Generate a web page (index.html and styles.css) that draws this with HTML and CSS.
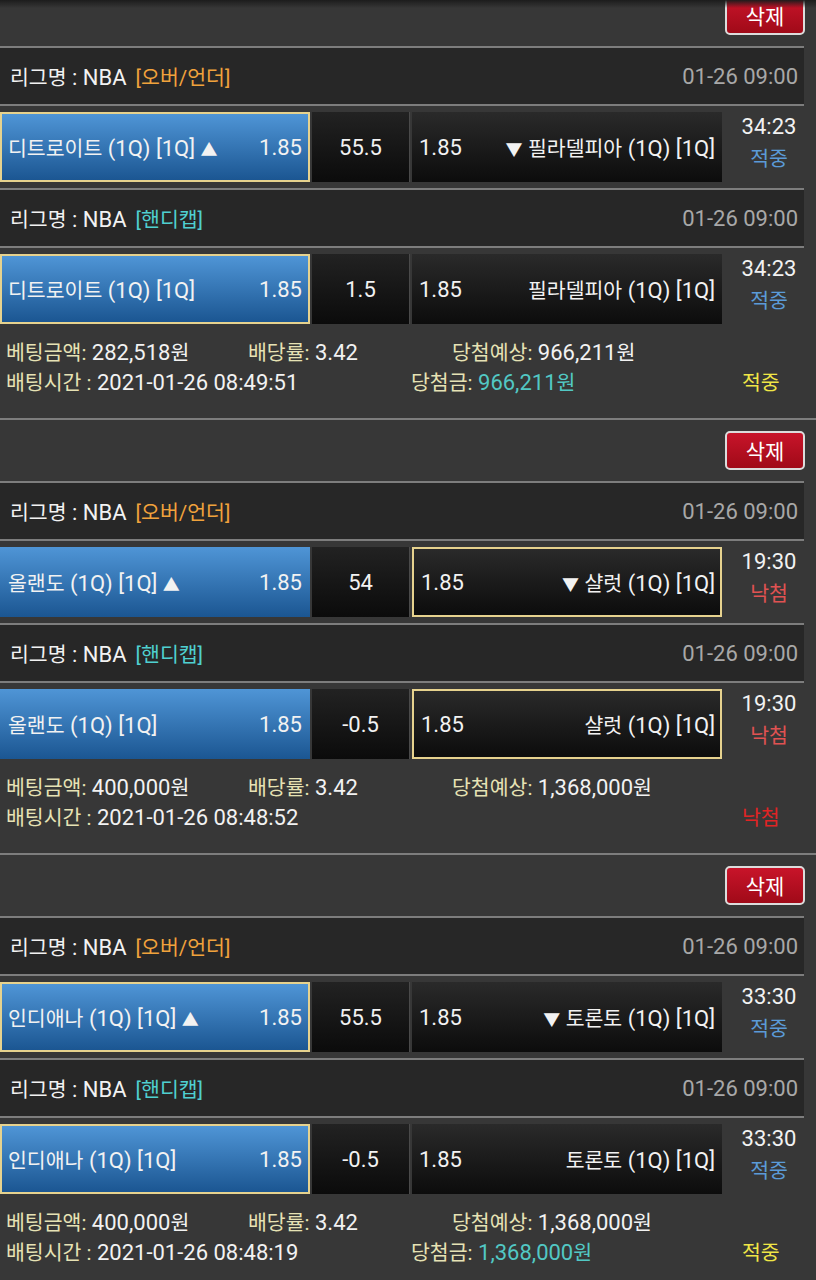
FILE: index.html
```html
<!DOCTYPE html>
<html lang="ko">
<head>
<meta charset="utf-8">
<title>베팅내역</title>
<link rel="stylesheet" href="styles.css">
</head>
<body>
<div class="topshade"></div>
<div class="list">

  <section class="bet">
    <div class="btnbar"><button class="del">삭제</button></div>
    <div class="league"><span class="lname"><span class="k">리그명</span> : NBA</span><span class="type ou">[오버/언더]</span><span class="ltime">01-26 09:00</span></div>
    <div class="game">
      <div class="cell home sel"><span><span class="k">디트로이트</span> (1Q) [1Q] <span class="tri">▲</span></span><span>1.85</span></div>
      <div class="cell mid">55.5</div>
      <div class="cell away"><span>1.85</span><span><span class="tri">▼</span> <span class="k">필라델피아</span> (1Q) [1Q]</span></div>
      <div class="status"><span class="clock">34:23</span><span class="res win">적중</span></div>
    </div>
    <div class="league"><span class="lname"><span class="k">리그명</span> : NBA</span><span class="type hc">[핸디캡]</span><span class="ltime">01-26 09:00</span></div>
    <div class="game last">
      <div class="cell home sel"><span><span class="k">디트로이트</span> (1Q) [1Q]</span><span>1.85</span></div>
      <div class="cell mid">1.5</div>
      <div class="cell away"><span>1.85</span><span><span class="k">필라델피아</span> (1Q) [1Q]</span></div>
      <div class="status"><span class="clock">34:23</span><span class="res win">적중</span></div>
    </div>
    <div class="summary">
      <div class="sline">
        <span class="c1"><b>베팅금액:</b> 282,518<span class="k">원</span></span>
        <span class="c2"><b>배당률:</b> 3.42</span>
        <span class="c3"><b>당첨예상:</b> 966,211<span class="k">원</span></span>
      </div>
      <div class="sline">
        <span class="d1"><b>배팅시간 :</b> 2021-01-26 08:49:51</span>
        <span class="d2"><b>당첨금:</b> <em>966,211<span class="k">원</span></em></span>
        <span class="d3 hit">적중</span>
      </div>
    </div>
  </section>

  <section class="bet">
    <div class="btnbar"><button class="del">삭제</button></div>
    <div class="league"><span class="lname"><span class="k">리그명</span> : NBA</span><span class="type ou">[오버/언더]</span><span class="ltime">01-26 09:00</span></div>
    <div class="game">
      <div class="cell home"><span><span class="k">올랜도</span> (1Q) [1Q] <span class="tri">▲</span></span><span>1.85</span></div>
      <div class="cell mid">54</div>
      <div class="cell away sel"><span>1.85</span><span><span class="tri">▼</span> <span class="k">샬럿</span> (1Q) [1Q]</span></div>
      <div class="status"><span class="clock">19:30</span><span class="res lose">낙첨</span></div>
    </div>
    <div class="league"><span class="lname"><span class="k">리그명</span> : NBA</span><span class="type hc">[핸디캡]</span><span class="ltime">01-26 09:00</span></div>
    <div class="game last">
      <div class="cell home"><span><span class="k">올랜도</span> (1Q) [1Q]</span><span>1.85</span></div>
      <div class="cell mid">-0.5</div>
      <div class="cell away sel"><span>1.85</span><span><span class="k">샬럿</span> (1Q) [1Q]</span></div>
      <div class="status"><span class="clock">19:30</span><span class="res lose">낙첨</span></div>
    </div>
    <div class="summary">
      <div class="sline">
        <span class="c1"><b>베팅금액:</b> 400,000<span class="k">원</span></span>
        <span class="c2"><b>배당률:</b> 3.42</span>
        <span class="c3"><b>당첨예상:</b> 1,368,000<span class="k">원</span></span>
      </div>
      <div class="sline">
        <span class="d1"><b>배팅시간 :</b> 2021-01-26 08:48:52</span>
        <span class="d2"></span>
        <span class="d3 miss">낙첨</span>
      </div>
    </div>
  </section>

  <section class="bet">
    <div class="btnbar"><button class="del">삭제</button></div>
    <div class="league"><span class="lname"><span class="k">리그명</span> : NBA</span><span class="type ou">[오버/언더]</span><span class="ltime">01-26 09:00</span></div>
    <div class="game">
      <div class="cell home sel"><span><span class="k">인디애나</span> (1Q) [1Q] <span class="tri">▲</span></span><span>1.85</span></div>
      <div class="cell mid">55.5</div>
      <div class="cell away"><span>1.85</span><span><span class="tri">▼</span> <span class="k">토론토</span> (1Q) [1Q]</span></div>
      <div class="status"><span class="clock">33:30</span><span class="res win">적중</span></div>
    </div>
    <div class="league"><span class="lname"><span class="k">리그명</span> : NBA</span><span class="type hc">[핸디캡]</span><span class="ltime">01-26 09:00</span></div>
    <div class="game last">
      <div class="cell home sel"><span><span class="k">인디애나</span> (1Q) [1Q]</span><span>1.85</span></div>
      <div class="cell mid">-0.5</div>
      <div class="cell away"><span>1.85</span><span><span class="k">토론토</span> (1Q) [1Q]</span></div>
      <div class="status"><span class="clock">33:30</span><span class="res win">적중</span></div>
    </div>
    <div class="summary">
      <div class="sline">
        <span class="c1"><b>베팅금액:</b> 400,000<span class="k">원</span></span>
        <span class="c2"><b>배당률:</b> 3.42</span>
        <span class="c3"><b>당첨예상:</b> 1,368,000<span class="k">원</span></span>
      </div>
      <div class="sline">
        <span class="d1"><b>배팅시간 :</b> 2021-01-26 08:48:19</span>
        <span class="d2"><b>당첨금:</b> <em>1,368,000<span class="k">원</span></em></span>
        <span class="d3 hit">적중</span>
      </div>
    </div>
  </section>

</div>
</body>
</html>
```
FILE: styles.css
```css
* { box-sizing: border-box; }
html, body {
  margin: 0;
  padding: 0;
  background: #373737;
  color: #f2f2f2;
  font-family: Roboto, "Noto Sans CJK KR", sans-serif;
  font-size: 22px;
  overflow: hidden;
}
.k { font-size: 20.5px; }
.tri { font-size: 17px; }
.topshade {
  position: fixed;
  left: 0; top: 0; right: 0;
  height: 8px;
  background: linear-gradient(#1c1c1c, rgba(55,55,55,0));
  z-index: 5;
}
.list { margin-top: -17px; }

.bet {
  border-top: 2px solid #7d7d7d;
  width: 816px;
}
.btnbar {
  height: 63px;
  display: flex;
  justify-content: flex-end;
  align-items: flex-start;
  padding-top: 11px;
  border-bottom: 2px solid #7d7d7d;
  margin-right: 12px;
}
.del {
  width: 80px;
  height: 39px;
  border: 2px solid #dcdcdc;
  border-radius: 5px;
  background: linear-gradient(#c8142a, #a00a18);
  color: #fff;
  font-family: "Noto Sans CJK KR", sans-serif;
  font-size: 21px;
  padding: 0;
  margin-right: -1px;
  line-height: 1;
}
.league {
  height: 58px;
  margin-right: 12px;
  background: #272727;
  border-bottom: 2px solid #7d7d7d;
  display: flex;
  align-items: center;
  padding: 0 6px 0 10px;
}
.lname { color: #f2f2f2; }
.type { margin-left: 9px; font-size: 20.5px; }
.type.ou { color: #f0a23c; }
.type.hc { color: #4fd0d0; }
.ltime { margin-left: auto; color: #a8a8a8; }

.game {
  height: 84px;
  display: flex;
  align-items: center;
  gap: 2px;
  border-bottom: 2px solid #7d7d7d;
  margin-right: 12px;
}
.game.last { border-bottom: 0; height: 82px; }
.cell {
  height: 70px;
  display: flex;
  align-items: center;
  justify-content: space-between;
  white-space: nowrap;
}
.home {
  width: 310px;
  padding: 0 8px;
  background: linear-gradient(#4f95d6, #1b5692);
}
.mid {
  width: 98px;
  justify-content: center;
  background: linear-gradient(#222, #0b0b0b);
  border-right: 1px solid #4a4a4a;
}
.away {
  width: 310px;
  padding: 0 7px;
  background: linear-gradient(#2a2a2a, #0c0c0c);
}
.cell.sel { border: 2px solid #e6d28e; }
.home.sel { padding: 0 6px; }
.away.sel { padding: 0 5px 0 7px; }
.status {
  width: 90px;
  margin-right: -12px;
  margin-bottom: 10px;
  display: flex;
  flex-direction: column;
  align-items: center;
  line-height: 30px;
}
.clock { color: #f2f2f2; }
.res { font-family: "Noto Sans CJK KR", sans-serif; font-size: 20.5px; }
.res.win { color: #5b9bd8; }
.res.lose { color: #e05252; }

.summary {
  height: 88px;
  padding: 8px 0 0 6px;
}
.sline {
  display: flex;
  line-height: 30px;
  white-space: nowrap;
}
.sline b { font-weight: normal; color: #e6e2b4; font-size: 20.5px; }
.sline em { font-style: normal; color: #52c8c4; }
.c1 { width: 242px; }
.c2 { width: 204px; }
.d1 { width: 405px; }
.d2 { width: 331px; }
.d3 { font-size: 20.5px; }
.hit { color: #f0e646; }
.miss { color: #e02424; }
```
